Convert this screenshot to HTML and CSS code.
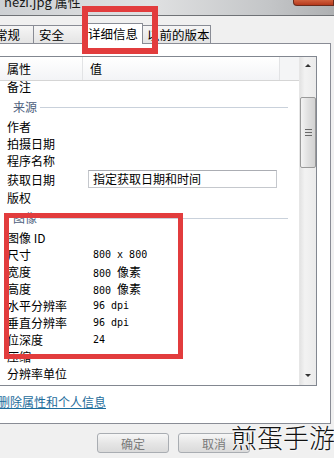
FILE: index.html
```html
<!DOCTYPE html>
<html lang="zh-CN">
<head>
    <meta charset="UTF-8">
    <title>nezi.jpg 属性</title>
    <link rel="stylesheet" href="styles.css">
</head>
<body>
    <div class="titlebar">
        <span class="title">nezi.jpg 属性</span>
        <span class="close-btn"></span>
    </div>

    <!-- 选项卡 -->
    <div class="tabs">
        <div class="tab first">常规</div>
        <div class="tab second">安全</div>
        <div class="tab active">详细信息</div>
        <div class="tab">以前的版本</div>
    </div>

    <div class="panel">
        <div class="list">
            <div class="list-main">
                <div class="list-head">
                    <div class="head-name">属性</div>
                    <div class="head-val">值</div>
                    <div class="head-fill"></div>
                </div>
                <div class="list-body">
                    <div class="row cut"><span class="name">备注</span></div>

                    <div class="group">来源</div>
                    <div class="row"><span class="name">作者</span></div>
                    <div class="row"><span class="name">拍摄日期</span></div>
                    <div class="row"><span class="name">程序名称</span></div>
                    <div class="row edit">
                        <span class="name">获取日期</span>
                        <span class="textbox">指定获取日期和时间</span>
                    </div>
                    <div class="row"><span class="name">版权</span></div>

                    <div class="group">图像</div>
                    <div class="row"><span class="name">图像 ID</span></div>
                    <div class="row"><span class="name">尺寸</span><span class="val">800 x 800</span></div>
                    <div class="row"><span class="name">宽度</span><span class="val">800 <span class="unit">像素</span></span></div>
                    <div class="row"><span class="name">高度</span><span class="val">800 <span class="unit">像素</span></span></div>
                    <div class="row"><span class="name">水平分辨率</span><span class="val">96 dpi</span></div>
                    <div class="row"><span class="name">垂直分辨率</span><span class="val">96 dpi</span></div>
                    <div class="row"><span class="name">位深度</span><span class="val">24</span></div>
                    <div class="row"><span class="name">压缩</span></div>
                    <div class="row"><span class="name">分辨率单位</span></div>
                </div>
            </div>

            <!-- 滚动条 -->
            <div class="scrollbar">
                <div class="arrow up"></div>
                <div class="thumb"><span></span><span></span><span></span></div>
                <div class="arrow down"></div>
            </div>
        </div>

        <a class="remove-link" href="#">删除属性和个人信息</a>
    </div>

    <div class="footer">
        <button class="btn">确定</button>
        <button class="btn">取消</button>
    </div>

    <!-- 标注 -->
    <div class="mark mark-tab"></div>
    <div class="mark mark-image"></div>
    <div class="watermark">煎蛋手游</div>
</body>
</html>
```

FILE: styles.css
```css
* {
    margin: 0;
    padding: 0;
    box-sizing: border-box;
}

body {
    width: 334px;
    height: 458px;
    overflow: hidden;
    position: relative;
    background-color: #f0f0f0;
    color: #000;
    font-family: "Noto Sans CJK SC", "Liberation Sans", sans-serif;
    font-size: 12px;
}

.titlebar {
    height: 16px;
    display: flex;
    align-items: flex-start;
    overflow: hidden;
    background: linear-gradient(to right, #cdd0d3, #e0e1e2 45%, #c4c6c8 80%, #aeb0b2);
    border-bottom: 1px solid #6f7276;
}

.title {
    margin-top: -7px;
    padding-left: 4px;
    font-size: 13px;
    line-height: 17px;
    color: #1a1a1a;
}

.close-btn {
    margin-left: auto;
    width: 41px;
    height: 6px;
    background: linear-gradient(#d0603d, #b5391c);
    border: 1px solid #6a2a1a;
    border-top: none;
    border-radius: 0 0 0 4px;
}

.tabs {
    height: 27px;
    display: flex;
    align-items: flex-end;
    position: relative;
    z-index: 1;
}

.tab {
    height: 18px;
    line-height: 17px;
    padding-left: 4px;
    border: 1px solid #898c95;
    border-bottom: none;
    background: linear-gradient(#f6f6f6, #e4e4e4);
    margin-left: -1px;
    font-size: 12.5px;
    white-space: nowrap;
}

.tab.first {
    margin-left: -13px;
    width: 47px;
    padding-left: 7px;
}

.tab.second {
    width: 51px;
    padding-left: 5px;
}

.tab.active {
    height: 21px;
    width: 60px;
    margin-bottom: -1px;
    line-height: 19px;
    background: #fff;
}

.tab:last-child {
    width: 69px;
}

.panel {
    height: 381px;
    margin-right: 3px;
    padding-top: 12px;
    background-color: #fff;
    border: 1px solid #898c95;
    border-left: none;
}

.list {
    width: 318px;
    height: 330px;
    margin-left: -1px;
    display: flex;
    border: 1px solid #828790;
}

.list-main {
    flex: 1;
    display: flex;
    flex-direction: column;
}

.list-head {
    height: 24px;
    display: flex;
    background: linear-gradient(#ffffff, #f3f4f6);
    border-bottom: 1px solid #d5d5d5;
    line-height: 23px;
}

.head-name {
    width: 83px;
    padding-left: 7px;
    border-right: 1px solid #e2e3e5;
}

.head-val {
    width: 197px;
    padding-left: 7px;
    border-right: 1px solid #e2e3e5;
}

.head-fill {
    flex: 1;
    background: #f4f5f6;
}

.list-body {
    flex: 1;
    overflow: hidden;
}

.row {
    height: 17px;
    display: flex;
    align-items: center;
}

.row.cut {
    margin-top: -3px;
}

.row.edit {
    height: 20px;
}

.name {
    width: 93px;
    padding-left: 7px;
    white-space: nowrap;
}

.val {
    font-family: "DejaVu Sans Mono", monospace;
    font-size: 10px;
    white-space: pre;
}

.unit {
    font-family: "Noto Sans CJK SC", sans-serif;
    font-size: 12px;
}

.textbox {
    width: 189px;
    height: 18px;
    margin-left: -5px;
    padding-left: 4px;
    line-height: 16px;
    border: 1px solid #c5c8cd;
    border-top-color: #abadb3;
}

.group {
    height: 23px;
    display: flex;
    align-items: center;
    padding-left: 13px;
    color: #4e5f7d;
}

.group::after {
    content: "";
    flex: 1;
    height: 1px;
    margin: 1px 11px 0 3px;
    background-color: #c9d1db;
}

.scrollbar {
    width: 17px;
    display: flex;
    flex-direction: column;
    align-items: center;
    background: linear-gradient(to right, #e3e3e3, #f2f2f2 30%, #ebebeb);
    border-left: 1px solid #e6e6e6;
}

.arrow {
    width: 0;
    height: 0;
    border-left: 3px solid transparent;
    border-right: 3px solid transparent;
}

.arrow.up {
    margin-top: 7px;
    border-bottom: 3px solid #333;
}

.arrow.down {
    margin-top: auto;
    margin-bottom: 8px;
    border-top: 3px solid #333;
}

.thumb {
    width: 16px;
    height: 71px;
    margin-top: 30px;
    display: flex;
    flex-direction: column;
    align-items: center;
    justify-content: center;
    gap: 2px;
    background: linear-gradient(to right, #f3f3f3, #e0e0e0 50%, #d2d2d2);
    border: 1px solid #9a9a9a;
    border-radius: 2px;
}

.thumb span {
    width: 7px;
    height: 1px;
    background-color: #6a6a6a;
}

.remove-link {
    display: block;
    margin-top: 8px;
    margin-left: -2px;
    line-height: 16px;
    color: #1d6c9b;
    text-decoration: underline;
}

.footer {
    display: flex;
    gap: 9px;
    padding: 9px 0 0 97px;
}

.btn {
    width: 72px;
    height: 20px;
    font-family: "Noto Sans CJK SC", sans-serif;
    font-size: 12px;
    color: #7a7a7a;
    background: linear-gradient(#f7f7f7, #e6e6e6 50%, #dadada);
    border: 1px solid #a9adb2;
    border-radius: 3px;
}

.mark {
    position: absolute;
    border: 6px solid #e23c3d;
    z-index: 5;
}

.mark-tab {
    left: 82px;
    top: 6px;
    width: 76px;
    height: 48px;
}

.mark-image {
    left: 4px;
    top: 213px;
    width: 179px;
    height: 146px;
    border-width: 5px;
}

.watermark {
    position: absolute;
    right: -1px;
    top: 421px;
    z-index: 6;
    font-size: 26px;
    font-weight: 300;
    line-height: 32px;
    color: #111;
    text-shadow: 0 0 2px #fff, 0 0 3px #fff;
}
```
